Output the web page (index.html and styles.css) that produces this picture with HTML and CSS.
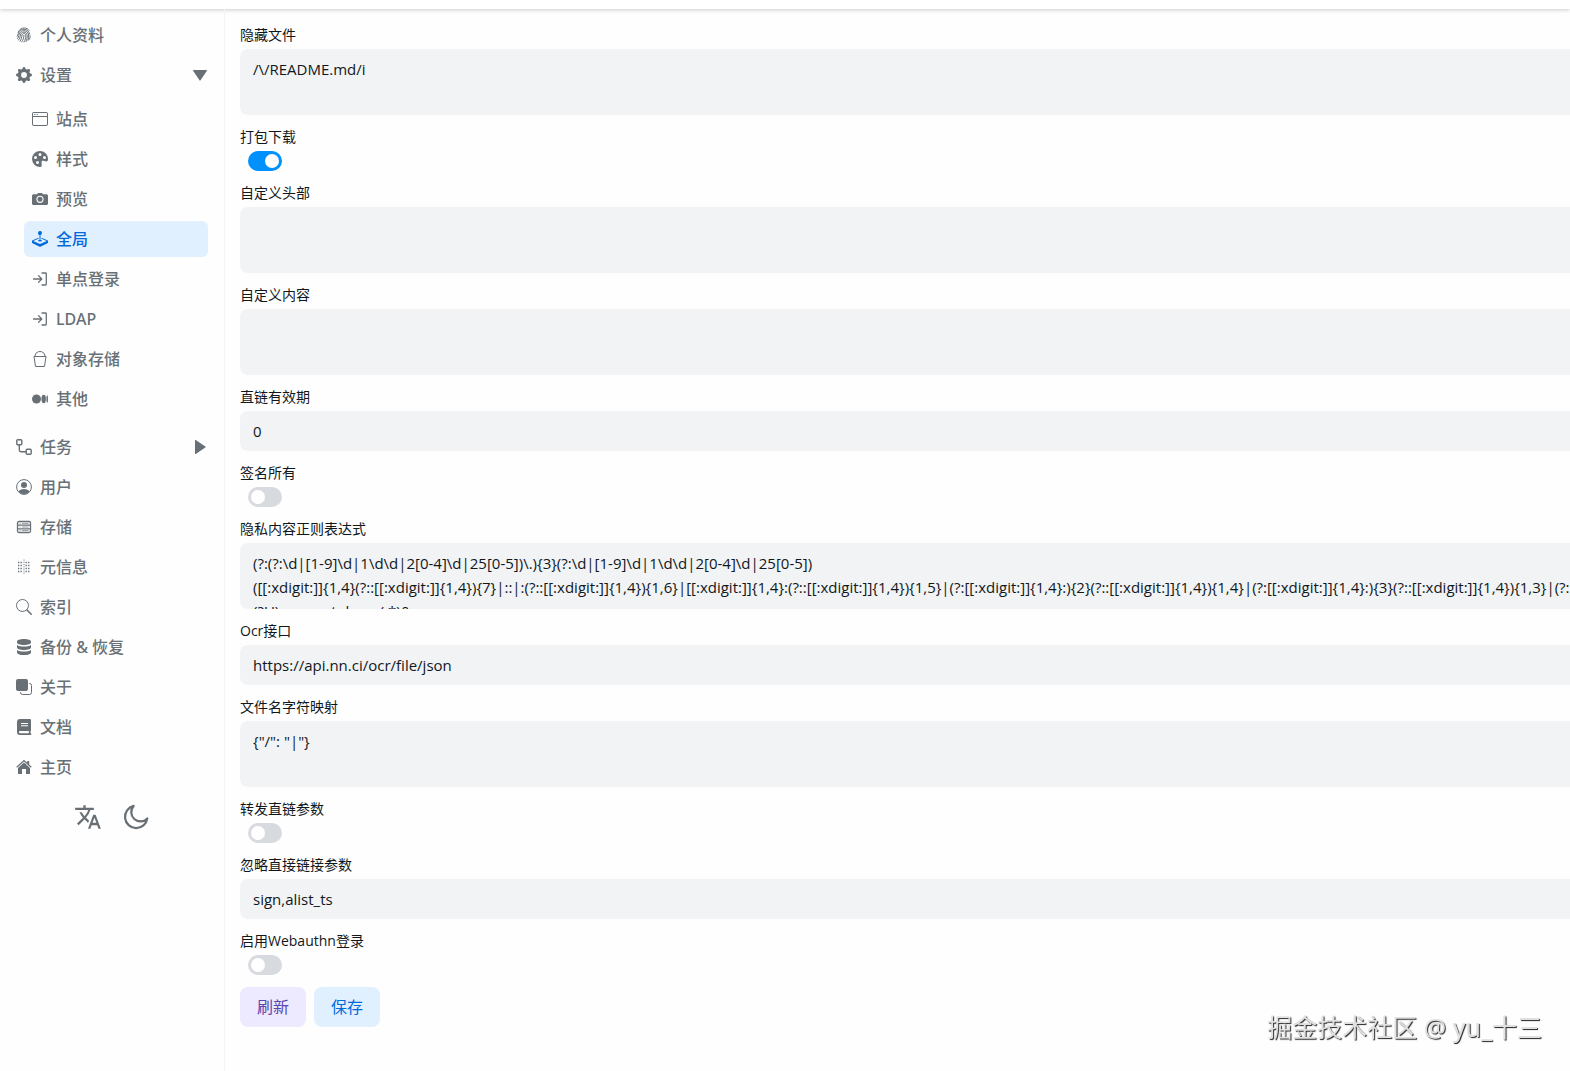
FILE: index.html
```html
<!DOCTYPE html>
<html lang="zh-CN">
<head>
<meta charset="utf-8">
<meta name="viewport" content="width=device-width, initial-scale=1">
<title>全局 - 设置</title>
<link rel="stylesheet" href="styles.css">
</head>
<body>
<header class="topbar"></header>
<div class="layout">
  <aside class="sidebar">
    <nav class="menu">
      <a class="item" href="#profile"><svg class="icon" viewBox="0 0 16 16" fill="none" stroke="currentColor" stroke-width="1" stroke-linecap="round"><path d="M2.200 5.200C3.400 2.400 5.500 1 8.200 1c2 0 3.800.9 5 2.400M1.200 9.200c1-1.600 1-3.200 1.900-4.700C4.300 3 6 2.200 8 2.300c3 .1 5.200 2 5.700 4.800M1.600 11.400C3 9.600 2.900 7.600 3.600 6.100 4.400 4.500 6 3.600 7.900 3.700c2.600.1 4.400 1.900 4.700 4.300.2 1.700 0 3.500-.6 5.400M2.600 13C4.400 10.800 4 8.600 4.800 7 5.400 5.700 6.600 5 7.900 5.100c1.900.1 3.200 1.500 3.300 3.400.1 2.100-.3 4.100-1.200 6.100M4 14.300C5.700 12 5.500 9.900 6 8.100c.3-1 1-1.600 1.900-1.600 1.200.1 1.900 1 1.900 2.200 0 2.200-.6 4.300-1.800 6.300M5.800 14.900C7.500 12.600 7.800 10.500 7.900 8.300M14.100 8.800c0 1.200-.1 2.300-.5 3.400"/></svg><span>个人资料</span></a>
      <a class="item" href="#settings"><svg class="icon" viewBox="0 0 16 16" fill="currentColor"><path d="M9.405 1.050c-.413-1.400-2.397-1.400-2.810 0l-.1.340a1.464 1.464 0 0 1-2.105.872l-.310-.170c-1.283-.698-2.686.705-1.987 1.987l.169.311c.446.820.023 1.841-.872 2.105l-.340.100c-1.400.413-1.400 2.397 0 2.810l.340.100a1.464 1.464 0 0 1 .872 2.105l-.170.310c-.698 1.283.705 2.686 1.987 1.987l.311-.169a1.464 1.464 0 0 1 2.105.872l.100.340c.413 1.400 2.397 1.400 2.810 0l.100-.340a1.464 1.464 0 0 1 2.105-.872l.310.170c1.283.698 2.686-.705 1.987-1.987l-.169-.311a1.464 1.464 0 0 1 .872-2.105l.340-.100c1.400-.413 1.400-2.397 0-2.810l-.340-.100a1.464 1.464 0 0 1-.872-2.105l.170-.310c.698-1.283-.705-2.686-1.987-1.987l-.311.169a1.464 1.464 0 0 1-2.105-.872zM8 10.930a2.929 2.929 0 1 1 0-5.860 2.929 2.929 0 0 1 0 5.858z"/></svg><span>设置</span><svg class="arrow" viewBox="0 0 16 16" fill="currentColor"><path d="M1.500 3h13a.5.500 0 0 1 .4.800l-6.400 9.500a.6.600 0 0 1-1 0L1.100 3.800a.5.500 0 0 1 .4-.8z"/></svg></a>
      <div class="submenu">
        <a class="item" href="#site"><svg class="icon" viewBox="0 0 16 16" fill="currentColor"><path d="M2.500 4a.5.500 0 1 0 0-1 .5.500 0 0 0 0 1m2-.500a.5.500 0 1 1-1 0 .5.500 0 0 1 1 0m1 .500a.5.500 0 1 0 0-1 .5.500 0 0 0 0 1"/><path d="M2 1a2 2 0 0 0-2 2v10a2 2 0 0 0 2 2h12a2 2 0 0 0 2-2V3a2 2 0 0 0-2-2zm13 2v2H1V3a1 1 0 0 1 1-1h12a1 1 0 0 1 1 1M2 14a1 1 0 0 1-1-1V6h14v7a1 1 0 0 1-1 1z"/></svg><span>站点</span></a>
        <a class="item" href="#style"><svg class="icon" viewBox="0 0 16 16" fill="currentColor"><path d="M12.433 10.070C14.133 10.585 16 11.150 16 8a8 8 0 1 0-8 8c1.996 0 1.826-1.504 1.649-3.080-.124-1.101-.252-2.237.351-2.920.465-.527 1.420-.237 2.433.070M8 5a1.500 1.500 0 1 1 0-3 1.500 1.500 0 0 1 0 3m4.500 3a1.500 1.500 0 1 1 0-3 1.500 1.500 0 0 1 0 3M5 6.500a1.500 1.500 0 1 1-3 0 1.500 1.500 0 0 1 3 0m.500 6.500a1.500 1.500 0 1 1 0-3 1.500 1.500 0 0 1 0 3"/></svg><span>样式</span></a>
        <a class="item" href="#preview"><svg class="icon" viewBox="0 0 16 16" fill="currentColor"><path fill-rule="evenodd" d="M5 3.300 6 2h4l1 1.300h3.500A1.500 1.500 0 0 1 16 4.800v7.700a1.500 1.500 0 0 1-1.500 1.500h-13A1.500 1.500 0 0 1 0 12.500V4.800a1.500 1.500 0 0 1 1.500-1.500zM8 4.700a3.600 3.600 0 1 0 0 7.200 3.600 3.600 0 0 0 0-7.200zm0 1.100a2.500 2.500 0 1 1 0 5 2.500 2.500 0 0 1 0-5z"/><circle cx="8" cy="8.300" r="1.500"/></svg><span>预览</span></a>
        <a class="item active" href="#global" aria-current="page"><svg class="icon" viewBox="0 0 16 16" fill="currentColor"><path d="M10 2a2 2 0 0 1-1.500 1.937v5.087c.863.083 1.500.377 1.500.726 0 .414-.895.750-2 .750s-2-.336-2-.750c0-.350.637-.643 1.500-.726V3.937A2 2 0 1 1 10 2"/><path d="M0 9.665v1.717a1 1 0 0 0 .553.894l6.553 3.277a2 2 0 0 0 1.788 0l6.553-3.277a1 1 0 0 0 .553-.894V9.665c0-.100-.060-.190-.152-.230L9.500 6.715v.993l5.227 2.178a.125.125 0 0 1 .001.230l-5.940 2.546a2 2 0 0 1-1.576 0l-5.940-2.546a.125.125 0 0 1 .001-.230L6.500 7.708l-.013-.988L.152 9.435a.25.250 0 0 0-.152.230"/></svg><span>全局</span></a>
        <a class="item" href="#sso"><svg class="icon" viewBox="0 0 16 16" fill="none" stroke="currentColor" stroke-width="1.300" stroke-linecap="round" stroke-linejoin="round"><path d="M1.500 8h8M6.500 4.600 9.800 8l-3.300 3.400M10 2h3.500a.8.800 0 0 1 .8.800v10.400a.8.800 0 0 1-.8.800H10"/></svg><span>单点登录</span></a>
        <a class="item" href="#ldap"><svg class="icon" viewBox="0 0 16 16" fill="none" stroke="currentColor" stroke-width="1.300" stroke-linecap="round" stroke-linejoin="round"><path d="M1.500 8h8M6.500 4.600 9.800 8l-3.300 3.400M10 2h3.500a.8.800 0 0 1 .8.800v10.400a.8.800 0 0 1-.8.800H10"/></svg><span>LDAP</span></a>
        <a class="item" href="#s3"><svg class="icon" viewBox="0 0 16 16" fill="currentColor"><path d="M2.522 5H2a.5.500 0 0 0-.494.574l1.372 9.149A1.500 1.500 0 0 0 4.360 16h7.278a1.500 1.500 0 0 0 1.483-1.277l1.373-9.149A.5.500 0 0 0 14 5h-.522A5.500 5.500 0 0 0 2.522 5m1.005 0a4.500 4.500 0 0 1 8.945 0zm9.892 1-1.286 8.574a.5.500 0 0 1-.494.426H4.360a.5.500 0 0 1-.494-.426L2.580 6z"/></svg><span>对象存储</span></a>
        <a class="item" href="#other"><svg class="icon" viewBox="0 0 16 16" fill="currentColor"><circle cx="4.500" cy="8" r="4.500"/><ellipse cx="11.700" cy="8" rx="2.200" ry="4.200"/><ellipse cx="15.200" cy="8" rx=".8" ry="3.800"/></svg><span>其他</span></a>
      </div>
      <a class="item" href="#tasks"><svg class="icon" viewBox="0 0 16 16" fill="none" stroke="currentColor" stroke-width="1.400"><rect x=".8" y=".8" width="5" height="5" rx="1"/><rect x="10.200" y="10.200" width="5" height="5" rx="1"/><path d="M3.300 5.800v5.200a1.700 1.700 0 0 0 1.700 1.700h5.200"/></svg><span>任务</span><svg class="arrow" viewBox="0 0 16 16" fill="currentColor"><path d="M3 1.500v13a.5.500 0 0 0 .8.400l9.500-6.400a.6.600 0 0 0 0-1L3.800 1.100a.5.500 0 0 0-.8.400z"/></svg></a>
      <a class="item" href="#users"><svg class="icon" viewBox="0 0 16 16"><circle cx="8" cy="8" r="7.400" fill="none" stroke="currentColor"/><circle cx="8" cy="6" r="3" fill="currentColor"/><path fill="currentColor" d="M2.500 12.600C3.400 10.900 5.500 10 8 10s4.600.9 5.500 2.600A7.200 7.200 0 0 1 8 15.200a7.200 7.200 0 0 1-5.500-2.600z"/></svg><span>用户</span></a>
      <a class="item" href="#storages"><svg class="icon" viewBox="0 0 16 16" fill="none" stroke="currentColor"><rect x="1.500" y="2.500" width="13" height="11" rx="1.500" stroke-width="1.300"/><path stroke-width="1.200" d="M1.500 6.200h13M1.500 9.800h13"/><path stroke-width=".7" d="M3.500 4.400h1M6 4.400h6.500M3.500 8h1M6 8h6.500M3.500 11.600h1M6 11.600h6.500"/></svg><span>存储</span></a>
      <a class="item" href="#metas"><svg class="icon" viewBox="0 0 16 16" fill="none" stroke="currentColor"><path stroke-width="1.300" stroke-dasharray="1.300 1.200" d="M2 3.500h4.500M9.600 3.500h4.800M2 6.500h4.500M9.600 6.500h4.800M2 9.500h4.500M9.600 9.500h4.800M2 12.500h4.500M9.600 12.500h4.800"/><path stroke-width=".8" stroke-dasharray="1.200 1" d="M8 .5v15"/></svg><span>元信息</span></a>
      <a class="item" href="#indexes"><svg class="icon" viewBox="0 0 16 16" fill="none" stroke="currentColor"><circle cx="6.500" cy="6.500" r="6"/><path stroke-width="1.600" stroke-linecap="round" d="m11 11 4.200 4.200"/></svg><span>索引</span></a>
      <a class="item" href="#backup"><svg class="icon" viewBox="0 0 16 16" fill="currentColor"><path d="M1 2.600C1 1.100 4 0 8 0s7 1.100 7 2.600v1C15 5 12 6.100 8 6.100S1 5 1 3.600zM1 6c1.500 1 4 1.500 7 1.500S13.500 7 15 6v2.500C15 10 12 11 8 11s-7-1-7-2.500zM1 11c1.500 1 4 1.500 7 1.500s5.500-.5 7-1.500v2.400C15 14.900 12 16 8 16s-7-1.100-7-2.600z"/></svg><span>备份 &amp; 恢复</span></a>
      <a class="item" href="#about"><svg class="icon" viewBox="0 0 16 16"><rect width="12" height="12" rx="2" fill="currentColor"/><path d="M13 4.500h.5a2 2 0 0 1 2 2v7a2 2 0 0 1-2 2h-7a2 2 0 0 1-2-2V13" fill="none" stroke="currentColor"/></svg><span>关于</span></a>
      <a class="item" href="#docs"><svg class="icon" viewBox="0 0 16 16" fill="currentColor"><path fill-rule="evenodd" d="M4 0h10a1 1 0 0 1 1 1v10.200a1 1 0 0 1-.5.800v2.200a.9.900 0 0 1 0 1.800H4a3 3 0 0 1-3-3V3a3 3 0 0 1 3-3zm1 4v1h7V4zm0 2.200v1h7v-1zM4 12a1.100 1.100 0 0 0 0 2.200h8.800V12z"/></svg><span>文档</span></a>
      <a class="item" href="#home"><svg class="icon" viewBox="0 0 16 16" fill="currentColor"><path d="M8 3.500 14 9v5.500a.6.600 0 0 1-.6.600H10V10H6v5.100H2.600a.6.600 0 0 1-.6-.6V9z"/><path d="M8 .8 11.200 3.700V2h2v3.500l2.500 2.300-.8.900L8 2.500 1.100 8.700l-.8-.9z"/></svg><span>主页</span></a>
    </nav>
    <div class="tools">
      <button class="tool" type="button" aria-label="语言"><svg viewBox="0 0 24 24" fill="currentColor"><path d="m12.870 15.070-2.540-2.510.030-.030A17.520 17.520 0 0 0 14.070 6H17V4h-7V2H8v2H1v2h11.170C11.500 7.920 10.440 9.750 9 11.350 8.070 10.320 7.300 9.190 6.690 8h-2c.730 1.630 1.730 3.170 2.980 4.560l-5.090 5.020L4 19l5-5 3.110 3.110zM18.500 10h-2L12 22h2l1.120-3h4.750L21 22h2zm-2.620 7 1.620-4.330L19.120 17z"/></svg></button>
      <button class="tool" type="button" aria-label="深色模式"><svg viewBox="0 0 24 24" fill="none" stroke="currentColor" stroke-width="1.900" stroke-linejoin="round"><path d="M10 2.500A9.600 9.600 0 1 0 21.700 13.200 7.800 7.800 0 0 1 10 2.500z"/></svg></button>
    </div>
  </aside>
  <main class="content">
    <form class="form">
      <div class="field"><label for="hide">隐藏文件</label><textarea id="hide" wrap="off">/\/README.md/i</textarea></div>
      <div class="field"><label for="pack">打包下载</label><input class="switch" id="pack" type="checkbox" checked></div>
      <div class="field"><label for="head">自定义头部</label><textarea id="head"></textarea></div>
      <div class="field"><label for="body">自定义内容</label><textarea id="body"></textarea></div>
      <div class="field"><label for="expire">直链有效期</label><input class="text" id="expire" type="text" value="0"></div>
      <div class="field"><label for="sign">签名所有</label><input class="switch" id="sign" type="checkbox"></div>
      <div class="field"><label for="privacy">隐私内容正则表达式</label><textarea id="privacy" wrap="off">(?:(?:\d|[1-9]\d|1\d\d|2[0-4]\d|25[0-5])\.){3}(?:\d|[1-9]\d|1\d\d|2[0-4]\d|25[0-5])
([[:xdigit:]]{1,4}(?::[[:xdigit:]]{1,4}){7}|::|:(?::[[:xdigit:]]{1,4}){1,6}|[[:xdigit:]]{1,4}:(?::[[:xdigit:]]{1,4}){1,5}|(?:[[:xdigit:]]{1,4}:){2}(?::[[:xdigit:]]{1,4}){1,4}|(?:[[:xdigit:]]{1,4}:){3}(?::[[:xdigit:]]{1,4}){1,3}|(?:[[:xdigit:]]{1,4}:){4}(?::[[:xdigit:]]{1,4}){1,2}
(?U)access_token=(.*)&amp;</textarea></div>
      <div class="field"><label for="ocr">Ocr接口</label><input class="text" id="ocr" type="text" value="https://api.nn.ci/ocr/file/json"></div>
      <div class="field"><label for="chars">文件名字符映射</label><textarea id="chars" wrap="off">{"/": "|"}</textarea></div>
      <div class="field"><label for="forward">转发直链参数</label><input class="switch" id="forward" type="checkbox"></div>
      <div class="field"><label for="ignore">忽略直接链接参数</label><input class="text" id="ignore" type="text" value="sign,alist_ts"></div>
      <div class="field"><label for="webauthn">启用Webauthn登录</label><input class="switch" id="webauthn" type="checkbox"></div>
      <div class="actions">
        <button class="btn refresh" type="button">刷新</button>
        <button class="btn save" type="button">保存</button>
      </div>
    </form>
  </main>
</div>
<div class="watermark">掘金技术社区 @ yu_十三</div>
</body>
</html>
```

FILE: styles.css
```css
* {
  box-sizing: border-box;
}

body {
  margin: 0;
  min-height: 100vh;
  display: flex;
  flex-direction: column;
  overflow: hidden;
  background: #fefefe;
  color: #11181c;
  font: 16px/24px "Open Sans", "Noto Sans CJK SC", sans-serif;
}

.topbar {
  height: 9px;
  background: #fff;
  box-shadow: 0 1px 4px rgba(0, 0, 0, 0.2);
}

.layout {
  flex: 1;
  display: flex;
}

.sidebar {
  flex: none;
  width: 225px;
  padding: 8px 16px 0 8px;
  border-right: 1px solid #f4f4f5;
  color: #687076;
}

.menu {
  display: flex;
  flex-direction: column;
  gap: 4px;
}

.item {
  display: flex;
  align-items: center;
  gap: 8px;
  height: 36px;
  padding: 0 8px;
  border-radius: 6px;
  color: inherit;
  font-family: "Noto Sans", "Noto Sans CJK SC", sans-serif;
  font-weight: 500;
  text-decoration: none;
}

.item.active {
  background: #e1f0ff;
  color: #006adc;
}

.icon {
  flex: none;
  width: 16px;
  height: 16px;
}

.arrow {
  width: 16px;
  height: 16px;
  margin-left: auto;
  margin-right: -8px;
}

.submenu {
  display: flex;
  flex-direction: column;
  gap: 4px;
  margin: 4px 0 8px;
  padding-left: 16px;
}

.tools {
  display: flex;
  justify-content: center;
  gap: 16px;
  padding: 16px 0 0 8px;
}

.tool {
  width: 32px;
  height: 32px;
  padding: 2px;
  border: 0;
  background: none;
  color: #687076;
}

.tool svg {
  display: block;
  width: 28px;
  height: 28px;
}

.content {
  flex: 1;
  min-width: 0;
  padding: 16px 0 44px 15px;
}

.form {
  display: flex;
  flex-direction: column;
  gap: 12px;
  margin-right: -16px;
}

.field {
  display: flex;
  flex-direction: column;
  gap: 4px;
}

.field label {
  font-size: 14px;
  line-height: 20px;
}

.text,
textarea {
  display: block;
  width: 100%;
  margin: 0;
  border: 0;
  border-radius: 8px;
  background: #f1f3f5;
  color: inherit;
  font: inherit;
  font-size: 15px;
}

.text {
  height: 40px;
  padding: 0 13px;
}

textarea {
  height: 66px;
  padding: 8px 13px;
  overflow: hidden;
  resize: none;
}

.switch {
  appearance: none;
  display: flex;
  width: 34px;
  height: 20px;
  margin: 0 0 0 8px;
  padding: 3px;
  border-radius: 10px;
  background: #d7dbdf;
}

.switch::before {
  content: "";
  width: 14px;
  height: 14px;
  border-radius: 50%;
  background: #fff;
}

.switch:checked {
  justify-content: flex-end;
  background: #0091ff;
}

.actions {
  display: flex;
  gap: 8px;
}

.btn {
  width: 66px;
  height: 40px;
  padding: 0;
  border: 0;
  border-radius: 8px;
  font: inherit;
}

.refresh {
  background: #ede9fe;
  color: #5746af;
}

.save {
  background: #e1f0ff;
  color: #006adc;
}

.watermark {
  position: fixed;
  right: 28px;
  bottom: 26px;
  color: #e0e0e0;
  font-family: "Noto Sans", "Noto Sans CJK SC", sans-serif;
  font-size: 25px;
  line-height: 36px;
  text-shadow: 1px 1px 1px #222;
}
```
